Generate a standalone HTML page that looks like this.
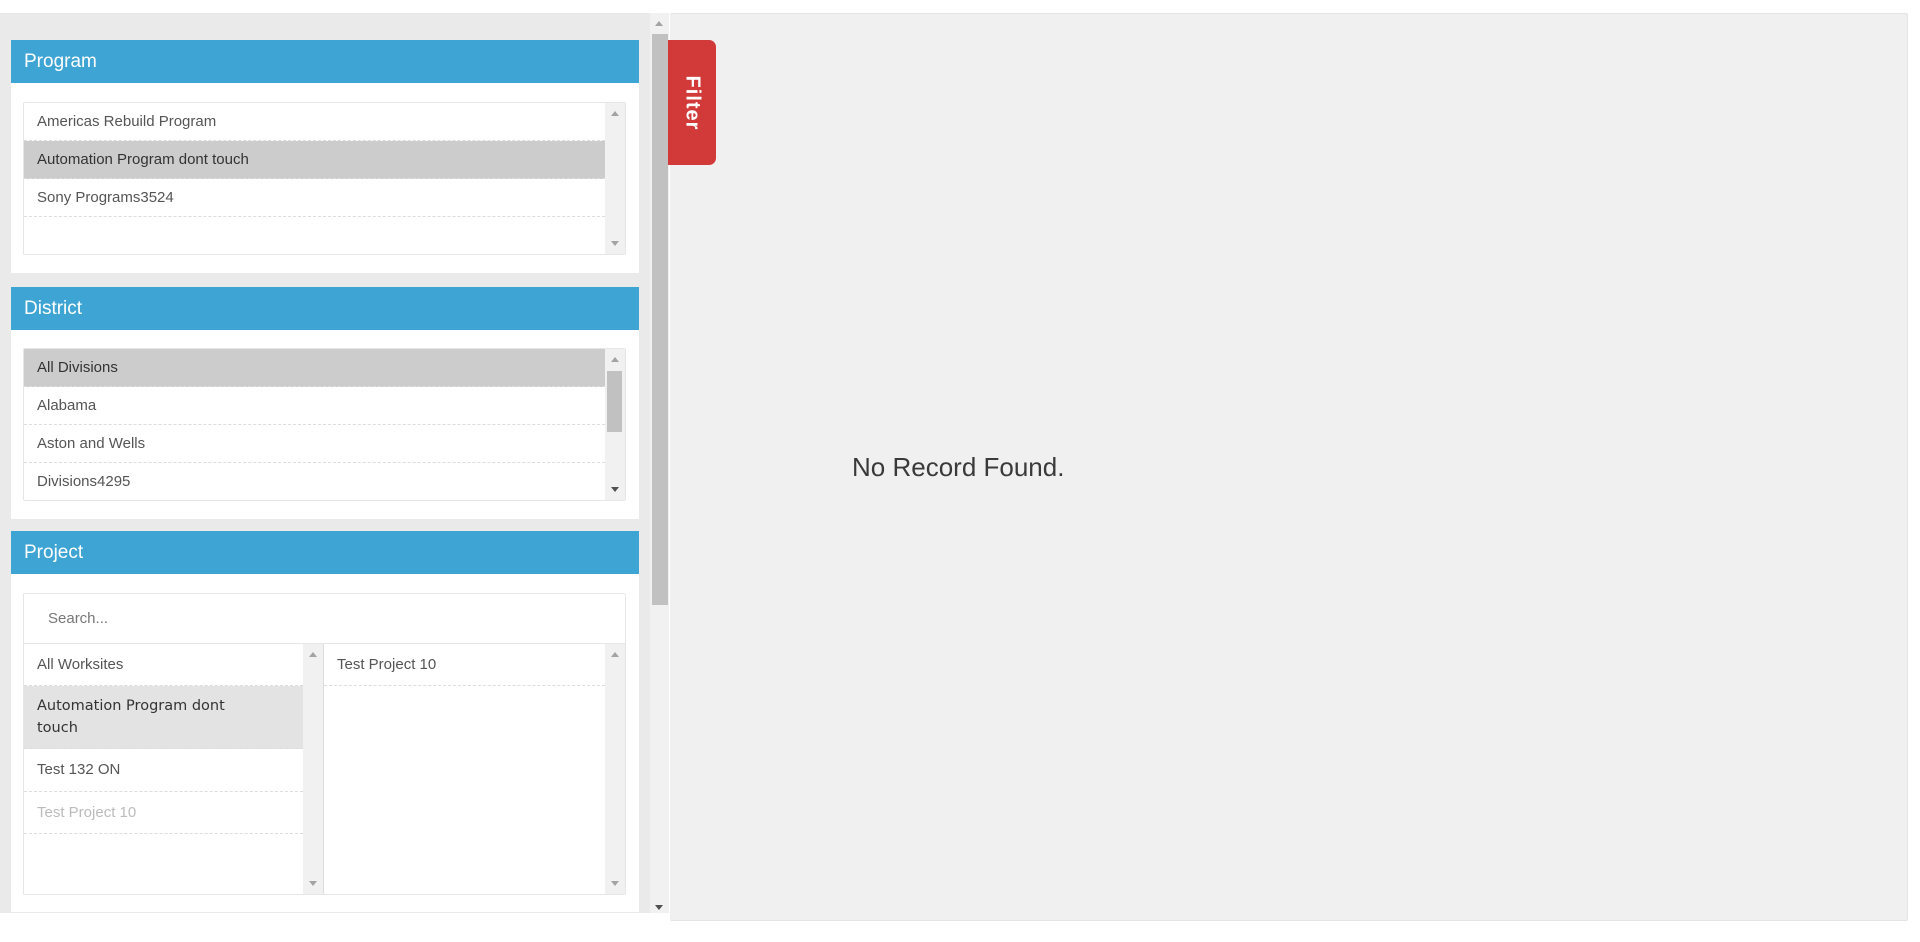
<!DOCTYPE html>
<html><head><meta charset="utf-8"><style>
*{box-sizing:border-box;margin:0;padding:0}
body{width:1920px;height:942px;background:#fff;font-family:"Liberation Sans",Arial,sans-serif;position:relative;overflow:hidden}
.abs{position:absolute}
#left{left:0;top:13px;width:650px;height:900px;background:#eaeaea}
#track{left:650px;top:13px;width:19px;height:900px;background:#f1f1f1}
#thumb{left:652px;top:34px;width:16px;height:571px;background:#c1c1c1}
.arr{position:absolute;width:0;height:0;border-left:4px solid transparent;border-right:4px solid transparent}
.up{border-bottom:5px solid #a3a3a3}
.dn{border-top:5px solid #505050}
#right{left:670px;top:13px;width:1238px;height:908px;background:#f0f0f0;border:1px solid #e4e4e4;border-left:none;border-radius:2px}
#filter{left:668px;top:40px;width:48px;height:125px;background:#d23a3a;border-radius:0 7px 7px 0}
#filter span{position:absolute;left:50%;top:50%;transform:translate(-50%,-50%) rotate(90deg);color:#fff;font-weight:bold;font-size:20px;letter-spacing:1px}
#nr{left:852px;top:452px;font-size:26px;color:#3a3a3a}
.card{position:absolute;left:11px;width:628px;background:#fff}
.hd{height:43px;background:#3ea4d4;color:#fff;font-size:19px;line-height:43px;padding-left:13px}
.box{position:absolute;left:12px;width:603px;border:1px solid #e6e6e6;border-radius:2px;overflow:hidden;background:#fff}
.row{height:38px;line-height:37px;padding-left:13px;font-size:15px;color:#555;border-bottom:1px dashed #ddd}
.sel{background:#ccc;color:#333}
.sb{position:absolute;right:0;top:0;bottom:0;width:20px;background:#f1f1f1}
</style></head><body>
<div id="left" class="abs"></div>
<div id="track" class="abs"></div>
<div id="thumb" class="abs"></div>
<div class="arr up" style="left:655px;top:21px"></div>
<div class="arr dn" style="left:655px;top:905px"></div>
<div id="right" class="abs"></div>
<div id="filter" class="abs"><span>Filter</span></div>
<div id="nr" class="abs">No Record Found.</div>

<div class="card" style="top:40px;height:233px">
 <div class="hd">Program</div>
 <div class="box" style="top:62px;height:153px">
  <div style="margin-right:20px">
   <div class="row">Americas Rebuild Program</div>
   <div class="row sel">Automation Program dont touch</div>
   <div class="row">Sony Programs3524</div>
  </div>
  <div class="sb"><div class="arr up" style="left:6px;top:8px"></div><div class="arr dn" style="left:6px;bottom:8px;border-top-color:#a3a3a3"></div></div>
 </div>
</div>

<div class="card" style="top:287px;height:232px">
 <div class="hd">District</div>
 <div class="box" style="top:61px;height:153px">
  <div style="margin-right:20px">
   <div class="row sel">All Divisions</div>
   <div class="row">Alabama</div>
   <div class="row">Aston and Wells</div>
   <div class="row">Divisions4295</div>
  </div>
  <div class="sb"><div class="arr up" style="left:6px;top:8px"></div><div style="position:absolute;left:2px;top:22px;width:15px;height:61px;background:#c1c1c1"></div><div class="arr dn" style="left:6px;bottom:8px"></div></div>
 </div>
</div>

<div class="card" style="top:531px;height:381px">
 <div class="hd">Project</div>
 <div class="box" style="top:62px;height:302px">
  <div style="height:50px;line-height:50px;padding-left:24px;font-size:15px;color:#777;border-bottom:1px solid #e6e6e6">Search...</div>
  <div style="position:absolute;left:0;top:50px;width:300px;bottom:0">
   <div style="margin-right:21px">
    <div class="row" style="height:42px;line-height:41px">All Worksites</div>
    <div class="row" style="height:63px;line-height:22px;padding-top:9px;background:#e3e3e3;color:#333;font-family:'DejaVu Sans',sans-serif;font-size:14.5px">Automation Program dont<br>touch</div>
    <div class="row" style="height:43px;line-height:42px">Test 132 ON</div>
    <div class="row" style="height:42px;line-height:41px;color:#bbb">Test Project 10</div>
   </div>
   <div class="sb" style="width:21px;border-right:1px solid #ddd"><div class="arr up" style="left:6px;top:8px"></div><div class="arr dn" style="left:6px;bottom:8px;border-top-color:#a3a3a3"></div></div>
  </div>
  <div style="position:absolute;left:300px;top:50px;right:0;bottom:0">
   <div style="margin-right:20px">
    <div class="row" style="height:42px;line-height:41px">Test Project 10</div>
   </div>
   <div class="sb"><div class="arr up" style="left:6px;top:8px"></div><div class="arr dn" style="left:6px;bottom:8px;border-top-color:#a3a3a3"></div></div>
  </div>
 </div>
</div>
</body></html>
